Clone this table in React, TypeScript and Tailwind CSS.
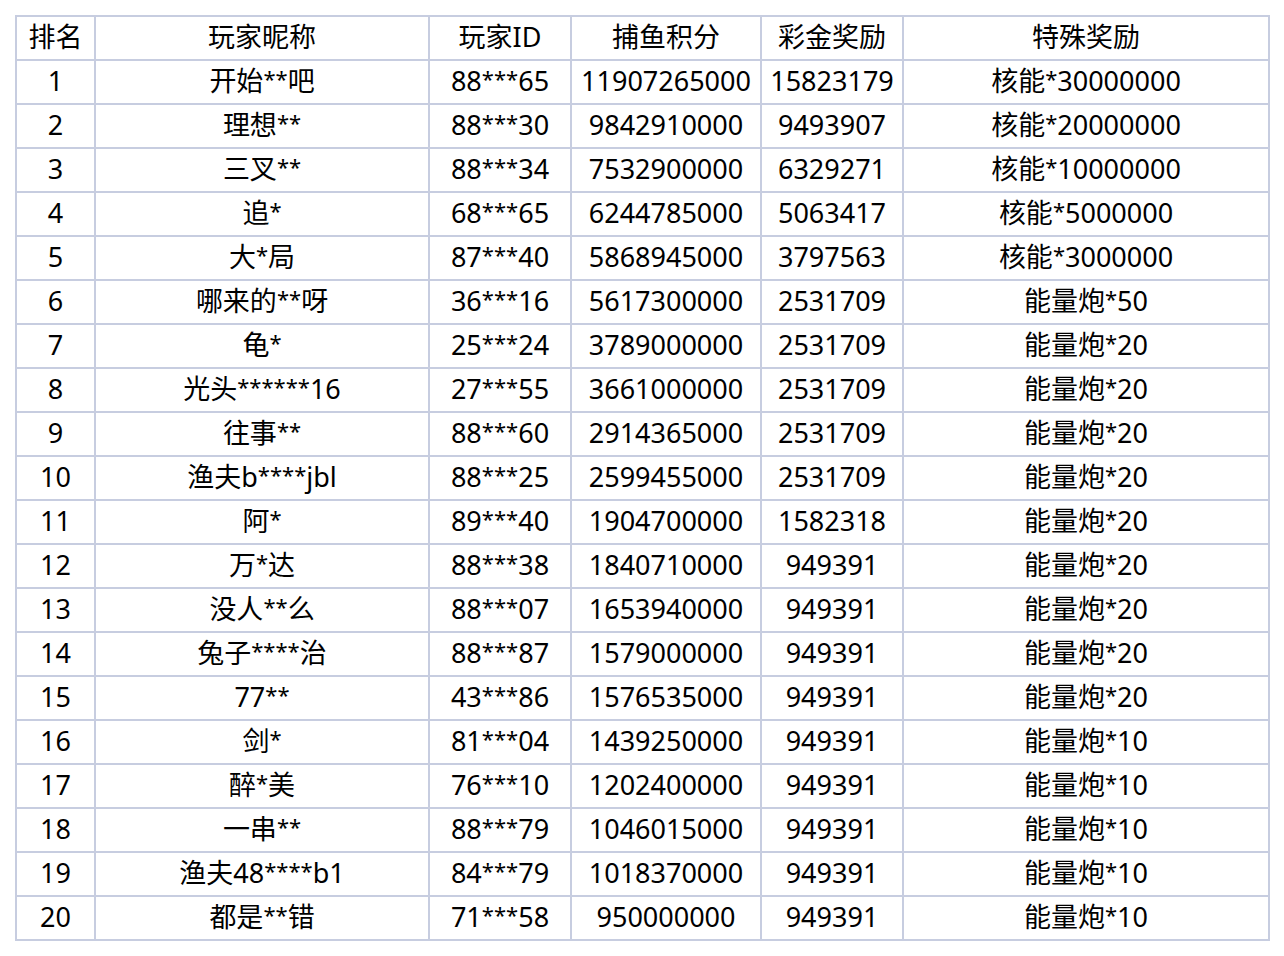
const headers = ["排名", "玩家昵称", "玩家ID", "捕鱼积分", "彩金奖励", "特殊奖励"];

const rows: string[][] = [
  ["1", "开始**吧", "88***65", "11907265000", "15823179", "核能*30000000"],
  ["2", "理想**", "88***30", "9842910000", "9493907", "核能*20000000"],
  ["3", "三叉**", "88***34", "7532900000", "6329271", "核能*10000000"],
  ["4", "追*", "68***65", "6244785000", "5063417", "核能*5000000"],
  ["5", "大*局", "87***40", "5868945000", "3797563", "核能*3000000"],
  ["6", "哪来的**呀", "36***16", "5617300000", "2531709", "能量炮*50"],
  ["7", "龟*", "25***24", "3789000000", "2531709", "能量炮*20"],
  ["8", "光头******16", "27***55", "3661000000", "2531709", "能量炮*20"],
  ["9", "往事**", "88***60", "2914365000", "2531709", "能量炮*20"],
  ["10", "渔夫b****jbl", "88***25", "2599455000", "2531709", "能量炮*20"],
  ["11", "阿*", "89***40", "1904700000", "1582318", "能量炮*20"],
  ["12", "万*达", "88***38", "1840710000", "949391", "能量炮*20"],
  ["13", "没人**么", "88***07", "1653940000", "949391", "能量炮*20"],
  ["14", "兔子****治", "88***87", "1579000000", "949391", "能量炮*20"],
  ["15", "77**", "43***86", "1576535000", "949391", "能量炮*20"],
  ["16", "剑*", "81***04", "1439250000", "949391", "能量炮*10"],
  ["17", "醉*美", "76***10", "1202400000", "949391", "能量炮*10"],
  ["18", "一串**", "88***79", "1046015000", "949391", "能量炮*10"],
  ["19", "渔夫48****b1", "84***79", "1018370000", "949391", "能量炮*10"],
  ["20", "都是**错", "71***58", "950000000", "949391", "能量炮*10"],
];

// the asterisks in the original are smaller than Noto Sans' ones
function Masked({ text }: { text: string }) {
  const parts = text.split(/(\*+)/);
  return (
    <>
      {parts.map((p, i) =>
        p.startsWith("*") ? (
          <span key={i} className="align-[4px] text-[22px]">
            {p}
          </span>
        ) : (
          p
        )
      )}
    </>
  );
}

export default function App() {
  return (
    <div className="min-h-screen bg-white pt-[15px] pl-[15px] font-['Noto_Sans','Noto_Sans_CJK_SC',sans-serif] text-[27px] text-black">
      <div className="grid w-max grid-cols-[77px_332px_140px_188px_140px_364px] gap-[2px] bg-[#c7cde0] p-[2px]">
        {headers.map((h) => (
          <div key={h} className="flex h-[42px] items-center justify-center bg-white pb-[3px] leading-none">
            {h}
          </div>
        ))}
        {rows.map((r) =>
          r.map((c, i) => (
            <div key={r[0] + "-" + i} className="flex h-[42px] items-center justify-center whitespace-nowrap bg-white pb-[3px] leading-none">
              <span>
                <Masked text={c} />
              </span>
            </div>
          ))
        )}
      </div>
    </div>
  );
}
